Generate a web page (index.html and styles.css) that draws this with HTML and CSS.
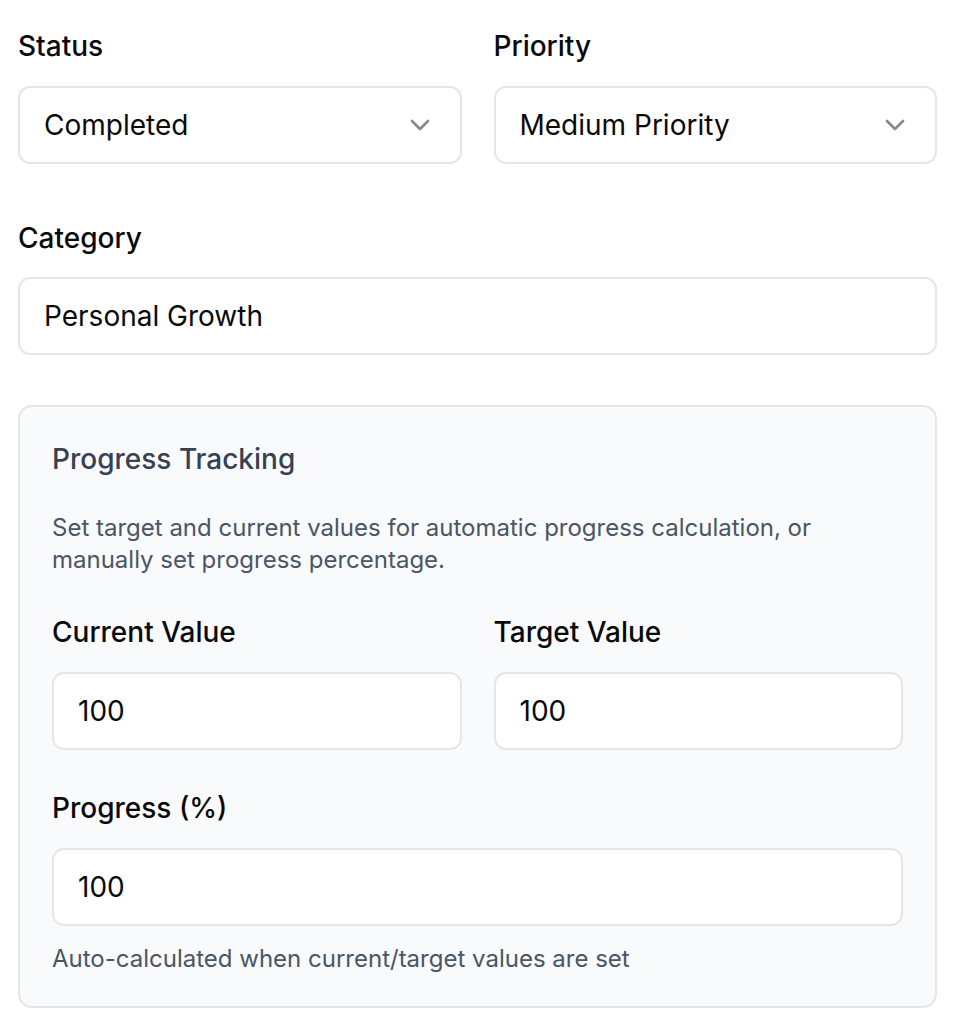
FILE: index.html
```html
<!DOCTYPE html>
<html lang="en">
<head>
<meta charset="utf-8">
<title>Goal form</title>
<link rel="stylesheet" href="styles.css">
</head>
<body>
<div class="form">
  <div class="row two">
    <div class="field">
      <div class="label">Status</div>
      <div class="control select"><span class="value">Completed</span>
        <svg class="chev" viewBox="0 0 24 24" width="32" height="32" fill="none" stroke="currentColor" stroke-width="2" stroke-linecap="round" stroke-linejoin="round"><path d="m6 9 6 6 6-6"/></svg>
      </div>
    </div>
    <div class="field">
      <div class="label">Priority</div>
      <div class="control select"><span class="value">Medium Priority</span>
        <svg class="chev" viewBox="0 0 24 24" width="32" height="32" fill="none" stroke="currentColor" stroke-width="2" stroke-linecap="round" stroke-linejoin="round"><path d="m6 9 6 6 6-6"/></svg>
      </div>
    </div>
  </div>
  <div class="field category">
    <div class="label">Category</div>
    <div class="control"><span class="value">Personal Growth</span></div>
  </div>
  <div class="panel">
    <div class="panel-title">Progress Tracking</div>
    <p class="desc">Set target and current values for automatic progress calculation, or manually set progress percentage.</p>
    <div class="row two inner">
      <div class="field">
        <div class="label">Current Value</div>
        <div class="control"><span class="value">100</span></div>
      </div>
      <div class="field">
        <div class="label">Target Value</div>
        <div class="control"><span class="value">100</span></div>
      </div>
    </div>
    <div class="field progress">
      <div class="label">Progress (%)</div>
      <div class="control"><span class="value">100</span></div>
    </div>
    <p class="hint">Auto-calculated when current/target values are set</p>
  </div>
</div>
</body>
</html>
```
FILE: styles.css
```css
* { box-sizing: border-box; }
html, body { margin: 0; padding: 0; background: #ffffff; }
body {
  font-family: Inter, "Noto Sans", sans-serif;
  color: #0a0a0a;
}
.form {
  width: 919px;
  margin-left: 18px;
  padding-top: 26px;
}
.row.two {
  display: grid;
  grid-template-columns: 1fr 1fr;
  column-gap: 32px;
}
.field { display: flex; flex-direction: column; }
.label {
  font-size: 28px;
  line-height: 40px;
  font-weight: 500;
  margin-bottom: 20px;
}
.category .label { margin-bottom: 19px; }
.control {
  height: 78px;
  border: 2px solid #e6e6e6;
  border-radius: 12px;
  background: #ffffff;
  display: flex;
  align-items: center;
  justify-content: space-between;
  padding: 0 24px;
  font-size: 28px;
}
.value { line-height: 40px; }
.chev { color: #8a8a8a; flex: none; margin-right: 0; }
.category { margin-top: 54px; }
.panel {
  margin-top: 50px;
  background: #f9fafb;
  border: 2px solid #e6e6e6;
  border-radius: 14px;
  padding: 32px 32px 31px;
}
.panel-title {
  font-size: 28px;
  line-height: 40px;
  font-weight: 500;
  color: #364153;
}
.desc {
  margin: 33px 0 0;
  font-size: 24px;
  line-height: 32px;
  color: #4a5565;
}
.inner { margin-top: 36px; }
.progress { margin-top: 38px; }
.hint {
  margin: 17px 0 0;
  font-size: 24px;
  line-height: 32px;
  color: #4a5565;
}
```
